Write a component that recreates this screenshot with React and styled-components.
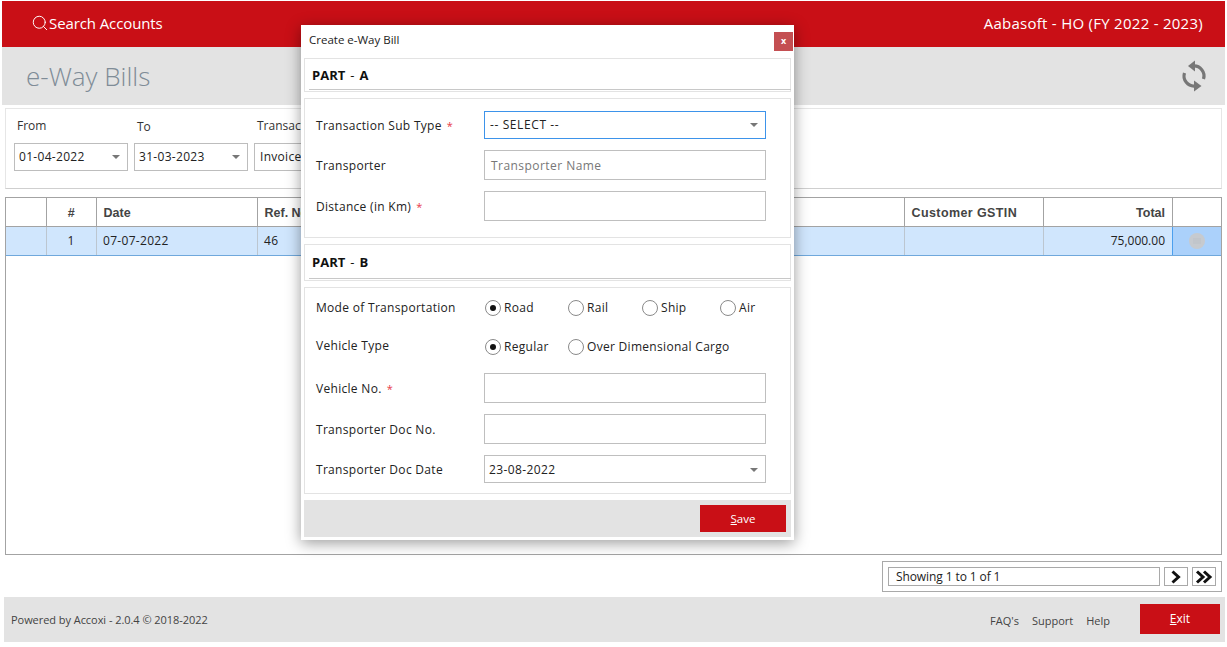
import React from "react";
import styled, { createGlobalStyle } from "styled-components";
import { Search } from "lucide-react";

const Global = createGlobalStyle`
  html, body { margin: 0; padding: 0; background: #fff; }
  body { font-family: "Open Sans", "Noto Sans", sans-serif; color: #222; }
  * { box-sizing: border-box; }
`;

const Page = styled.div`
  position: relative;
  width: 1227px;
  height: 647px;
  overflow: hidden;
  background: #fff;
  display: flex;
  flex-direction: column;
  padding-top: 1px;
`;
const TopBar = styled.header`
  height: 46px;
  margin: 0 2px;
  background: #c90f16;
  color: #fff;
  display: flex;
  align-items: center;
  justify-content: space-between;
  padding: 0 22px 2px 29px;
  font-size: 15px;
`;
const SearchBox = styled.div`
  display: flex;
  align-items: center;
  letter-spacing: -0.1px;
`;
const Company = styled.span`
  letter-spacing: 0.27px;
`;
const TitleBar = styled.div`
  height: 58px;
  margin: 0 2px;
  background: #e3e3e3;
  display: flex;
  align-items: center;
  justify-content: space-between;
  padding: 0 17px 0 24px;
`;
const Title = styled.h1`
  margin: 0;
  font-size: 26px;
  font-weight: 300;
  color: #7f8c97;
`;
const FilterPanel = styled.section`
  height: 81px;
  margin: 3px 5px 0;
  border: 1px solid #e6e6e6;
  border-bottom: 1px solid #cfcfcf;
  padding: 8px 8px 0;
  display: flex;
  gap: 6px;
`;
const FilterField = styled.div`
  width: 114px;
  display: flex;
  flex-direction: column;
`;
const FilterLabel = styled.label`
  font-size: 12px;
  height: 26px;
  line-height: 18px;
  padding: ${(p) => p.$dy || 0}px 0 0 3px;
  color: #333;
`;
const FilterSelect = styled.div`
  height: 28px;
  border: 1px solid #bdbdbd;
  display: flex;
  align-items: center;
  justify-content: space-between;
  padding: 0 7px 2px ${(p) => p.$pl}px;
  font-size: 12px;
  letter-spacing: 0.3px;
`;
const Caret = styled.span`
  width: 0;
  height: 0;
  margin-top: 1px;
  border-left: 4px solid transparent;
  border-right: 4px solid transparent;
  border-top: 4.5px solid #777;
`;
const Table = styled.div`
  margin: 8px 5px 0;
  height: 358px;
  border: 1px solid #a3a3a3;
`;
const Row = styled.div`
  display: grid;
  grid-template-columns: 41px 50px 161px 647px 139px 129px 1fr;
  height: 29px;
  background: ${(p) => p.$bg || "#fff"};
  border-bottom: 1px solid ${(p) => p.$line};
`;
const HeadCell = styled.div`
  font-family: "Liberation Sans", Arial, sans-serif;
  font-weight: 700;
  font-size: 12.5px;
  letter-spacing: ${(p) => p.$ls || 0}px;
  color: #444;
  display: flex;
  align-items: center;
  justify-content: ${(p) => p.$align || "flex-start"};
  padding: 1px 7px 0 6.5px;
  border-right: 1px solid #a3a3a3;
  &:last-child { border-right: 0; }
`;
const BodyCell = styled.div`
  font-size: 12px;
  letter-spacing: ${(p) => p.$ls ?? 0.3}px;
  color: #222;
  display: flex;
  align-items: center;
  justify-content: ${(p) => p.$align || "flex-start"};
  padding: 0 7px 1px 6px;
  border-right: 1px solid #bcc6d0;
  &:last-child { border-right: 0; }
`;
const ActionCell = styled.div`
  background: #abd1fb;
  border-left: 1px solid #4b9fee;
  display: flex;
  align-items: center;
  justify-content: center;
  margin-left: -1px;
`;
const Pager = styled.div`
  height: 31px;
  margin: 6px 5px 0 auto;
  width: 340px;
  border: 1px solid #a9a9a9;
  display: flex;
  align-items: center;
  padding: 0 5px;
  gap: 4px;
`;
const PagerInfo = styled.div`
  flex: 1;
  height: 19px;
  border: 1px solid #a9a9a9;
  display: flex;
  align-items: center;
  font-size: 12px;
  letter-spacing: -0.1px;
  padding-left: 7px;
`;
const PagerButton = styled.button`
  width: 24px;
  height: 19px;
  padding: 0;
  background: #fff;
  border: 1px solid #a9a9a9;
  display: flex;
  align-items: center;
  justify-content: center;
`;
const Footer = styled.footer`
  height: 45px;
  margin: 5px 2px 0 4px;
  background: #e3e3e3;
  display: flex;
  align-items: center;
  justify-content: space-between;
  padding: 0 5px 0 7px;
`;
const Powered = styled.span`
  font-size: 11px;
  letter-spacing: -0.05px;
  color: #444;
`;
const FooterRight = styled.div`
  display: flex;
  align-items: center;
`;
const FooterLink = styled.a`
  font-size: 11px;
  color: #444;
  margin-right: 13px;
  padding-top: 2px;
`;
const ExitButton = styled.button`
  width: 80px;
  height: 30px;
  margin: 0 0 2px 17px;
  border: 0;
  background: #c90f16;
  color: #fff;
  font: 400 12px "Open Sans", sans-serif;
`;

const Modal = styled.div`
  position: absolute;
  left: 301px;
  top: 25px;
  width: 493px;
  height: 515px;
  background: #fff;
  box-shadow: 0 3px 14px rgba(0, 0, 0, 0.4);
  padding: 0 3px;
  display: flex;
  flex-direction: column;
`;
const ModalHead = styled.div`
  height: 33px;
  display: flex;
  align-items: center;
  justify-content: space-between;
  padding: 0 0 5px 5px;
  font-size: 11.5px;
  color: #222;
`;
const CloseButton = styled.button`
  width: 19px;
  height: 19px;
  margin: 5px -2px 0 0;
  border: 0;
  padding: 0 0 2px;
  background: #c44f52;
  color: #fff;
  font: 700 9px "Open Sans", sans-serif;
`;
const PartHead = styled.div`
  position: relative;
  height: ${(p) => p.$h}px;
  border: 1px solid #e3e3e3;
  display: flex;
  align-items: center;
  padding: 0 0 ${(p) => p.$pb}px 7px;
  font-size: 13px;
  font-weight: 700;
  color: #111;
  margin-bottom: 6px;
  &::after {
    content: "";
    position: absolute;
    left: 4px;
    right: -1px;
    bottom: 1px;
    height: 1px;
    background: #c8c8c8;
  }
`;
const PartDash = styled.span`
  font-weight: 400;
  margin: 0 5px;
`;
const Section = styled.div`
  height: ${(p) => p.$h}px;
  border: 1px solid #e3e3e3;
  margin-bottom: 6px;
  padding: ${(p) => p.$pad}px 24px 0 11px;
  display: flex;
  flex-direction: column;
`;
const FieldRow = styled.div`
  display: grid;
  grid-template-columns: 168px 1fr;
  align-items: center;
  height: ${(p) => p.$h}px;
  margin-bottom: ${(p) => p.$gap || 0}px;
`;
const Label = styled.label`
  font-size: 12px;
  color: #222;
  letter-spacing: 0.3px;
  margin-top: ${(p) => p.$raise || 0}px;
`;
const Req = styled.span`
  color: #e8394a;
  font-size: 11px;
  margin-left: 5px;
`;
const Control = styled.div`
  height: ${(p) => p.$h || 30}px;
  border: 1px solid ${(p) => (p.$focus ? "#3d93ea" : "#bfbfbf")};
  display: flex;
  align-items: center;
  justify-content: space-between;
  padding: ${(p) => p.$pt || 0}px 7px ${(p) => p.$pb || 0}px ${(p) => p.$pl || 5}px;
  font-size: 12px;
  letter-spacing: ${(p) => p.$ls || 0.4}px;
  color: ${(p) => (p.$muted ? "#777" : "#222")};
`;
const RadioGroup = styled.div`
  display: flex;
  align-items: center;
`;
const RadioItem = styled.div`
  width: ${(p) => p.$w}px;
  display: flex;
  align-items: center;
  gap: 3px;
  font-size: 12px;
  letter-spacing: 0.3px;
  color: #222;
  white-space: nowrap;
  padding-left: 1px;
`;
const RadioText = styled.span`
  margin-top: -2px;
`;
const RadioDot = styled.span`
  width: 16px;
  height: 16px;
  border-radius: 50%;
  border: 1px solid #8a8a8a;
  display: flex;
  align-items: center;
  justify-content: center;
  flex: none;
  &::after {
    content: "";
    width: 6px;
    height: 6px;
    border-radius: 50%;
    background: ${(p) => (p.$on ? "#111" : "transparent")};
  }
`;
const ModalFoot = styled.div`
  height: 37px;
  background: #e3e3e3;
  display: flex;
  align-items: center;
  justify-content: flex-end;
  padding-right: 5px;
`;
const SaveButton = styled.button`
  width: 86px;
  height: 27px;
  border: 0;
  background: #c90f16;
  color: #fff;
  font: 400 11.5px "Open Sans", sans-serif;
`;

const Refresh = () => (
  <svg width="28" height="34" viewBox="0 0 28 34" fill="none">
    <path d="M13 7 A10 10 0 0 1 23.5 20" stroke="#777" strokeWidth="3.2" />
    <path d="M4.5 14 A10 10 0 0 0 15 27" stroke="#777" strokeWidth="3.2" />
    <path d="M8 7 L15 1.5 L15 12.5 Z" fill="#777" />
    <path d="M21.5 27 L14 21.5 L14 32.5 Z" fill="#777" />
  </svg>
);
const Chevron = ({ double }) => (
  <svg width="18" height="14" viewBox="0 0 18 14" fill="none" stroke="#111" strokeWidth="3">
    {double ? (
      <>
        <path d="M2 1.5 L8 7 L2 12.5" />
        <path d="M9 1.5 L15 7 L9 12.5" />
      </>
    ) : (
      <path d="M5.5 1.5 L11.5 7 L5.5 12.5" />
    )}
  </svg>
);
const MenuDot = () => (
  <svg width="16" height="16" viewBox="0 0 16 16">
    <circle cx="8" cy="8" r="8" fill="#c6cacf" />
    <path d="M4 6 H12 M4 8 H12 M4 10 H12" stroke="#bcc1c7" strokeWidth="1" />
  </svg>
);

const filters = [
  ["From", "01-04-2022", true, 0, 4],
  ["To", "31-03-2023", true, 1, 4],
  ["Transaction", "Invoices", false, 0, 5],
];

const Radio = ({ w, on, children }) => (
  <RadioItem $w={w}>
    <RadioDot $on={on} />
    <RadioText>{children}</RadioText>
  </RadioItem>
);

export default function App() {
  return (
    <Page>
      <Global />
      <TopBar>
        <SearchBox>
          <Search size={18} strokeWidth={1.3} />
          <span>Search Accounts</span>
        </SearchBox>
        <Company>Aabasoft - HO (FY 2022 - 2023)</Company>
      </TopBar>
      <TitleBar>
        <Title>e-Way Bills</Title>
        <Refresh />
      </TitleBar>
      <FilterPanel>
        {filters.map(([label, value, caret, dy, pl]) => (
          <FilterField key={label}>
            <FilterLabel $dy={dy}>{label}</FilterLabel>
            <FilterSelect $pl={pl}>
              {value}
              {caret && <Caret />}
            </FilterSelect>
          </FilterField>
        ))}
      </FilterPanel>
      <Table>
        <Row $line="#a3a3a3">
          <HeadCell />
          <HeadCell $align="center">#</HeadCell>
          <HeadCell>Date</HeadCell>
          <HeadCell>Ref. No</HeadCell>
          <HeadCell $ls={0.4}>Customer GSTIN</HeadCell>
          <HeadCell $align="flex-end">Total</HeadCell>
          <HeadCell />
        </Row>
        <Row $bg="#d0e6fd" $line="#6fa8dc">
          <BodyCell />
          <BodyCell $align="center">1</BodyCell>
          <BodyCell>07-07-2022</BodyCell>
          <BodyCell>46</BodyCell>
          <BodyCell />
          <BodyCell $align="flex-end" $ls={0}>
            75,000.00
          </BodyCell>
          <ActionCell>
            <MenuDot />
          </ActionCell>
        </Row>
      </Table>
      <Pager>
        <PagerInfo>Showing 1 to 1 of 1</PagerInfo>
        <PagerButton aria-label="Next">
          <Chevron />
        </PagerButton>
        <PagerButton aria-label="Last">
          <Chevron double />
        </PagerButton>
      </Pager>
      <Footer>
        <Powered>Powered by Accoxi - 2.0.4 © 2018-2022</Powered>
        <FooterRight>
          <FooterLink>FAQ's</FooterLink>
          <FooterLink>Support</FooterLink>
          <FooterLink>Help</FooterLink>
          <ExitButton>
            <u>E</u>xit
          </ExitButton>
        </FooterRight>
      </Footer>

      <Modal>
        <ModalHead>
          <span>Create e-Way Bill</span>
          <CloseButton>x</CloseButton>
        </ModalHead>
        <PartHead $h={34} $pb={0}>
          PART<PartDash>-</PartDash>A
        </PartHead>
        <Section $h={140} $pad={12}>
          <FieldRow $h={28} $gap={11}>
            <Label>
              Transaction Sub Type<Req>*</Req>
            </Label>
            <Control $h={28} $focus $ls={0.6} $pb={2}>
              -- SELECT --
              <Caret />
            </Control>
          </FieldRow>
          <FieldRow $h={30} $gap={11}>
            <Label>Transporter</Label>
            <Control $muted $pl={6} $ls={0.45} $pt={1}>
              Transporter Name
            </Control>
          </FieldRow>
          <FieldRow $h={30}>
            <Label>
              Distance (in Km)<Req>*</Req>
            </Label>
            <Control />
          </FieldRow>
        </Section>
        <PartHead $h={37} $pb={2}>
          PART<PartDash>-</PartDash>B
        </PartHead>
        <Section $h={207} $pad={8}>
          <FieldRow $h={24} $gap={15}>
            <Label $raise={-2}>Mode of Transportation</Label>
            <RadioGroup>
              <Radio w={83} on>
                Road
              </Radio>
              <Radio w={74}>Rail</Radio>
              <Radio w={78}>Ship</Radio>
              <Radio w={47}>Air</Radio>
            </RadioGroup>
          </FieldRow>
          <FieldRow $h={24} $gap={14}>
            <Label $raise={-4}>Vehicle Type</Label>
            <RadioGroup>
              <Radio w={83} on>
                Regular
              </Radio>
              <Radio w={190}>Over Dimensional Cargo</Radio>
            </RadioGroup>
          </FieldRow>
          <FieldRow $h={30} $gap={11}>
            <Label>
              Vehicle No.<Req>*</Req>
            </Label>
            <Control />
          </FieldRow>
          <FieldRow $h={30} $gap={11}>
            <Label>Transporter Doc No.</Label>
            <Control />
          </FieldRow>
          <FieldRow $h={28}>
            <Label>Transporter Doc Date</Label>
            <Control $h={28} $pl={4}>
              23-08-2022
              <Caret />
            </Control>
          </FieldRow>
        </Section>
        <ModalFoot>
          <SaveButton>
            <u>S</u>ave
          </SaveButton>
        </ModalFoot>
      </Modal>
    </Page>
  );
}
